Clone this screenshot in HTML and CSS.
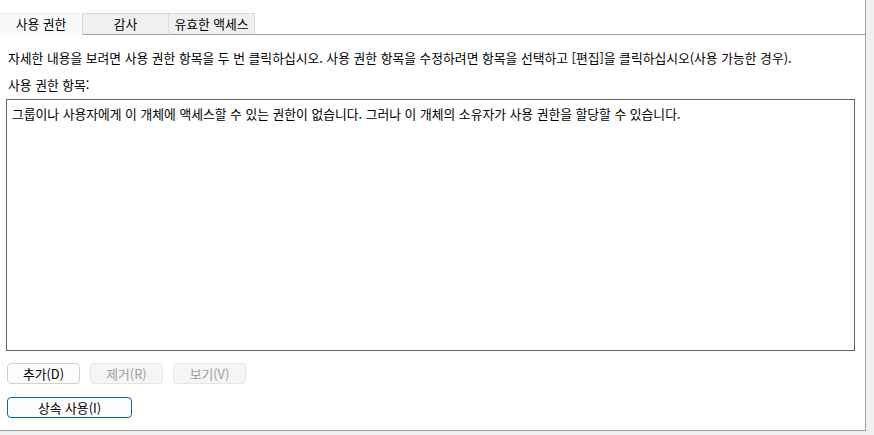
FILE: index.html
```html
<!DOCTYPE html>
<html lang="ko">
<head>
<meta charset="utf-8">
<link rel="stylesheet" href="styles.css">
</head>
<body>
<div class="panel">
  <div class="tabs">
    <div class="tab active">사용 권한</div>
    <div class="tab t2">감사</div>
    <div class="tab t3">유효한 액세스</div>
    <div class="tab-fill"></div>
  </div>
  <div class="content">
    <p class="desc">자세한 내용을 보려면 사용 권한 항목을 두 번 클릭하십시오. 사용 권한 항목을 수정하려면 항목을 선택하고 [편집]을 클릭하십시오(사용 가능한 경우).</p>
    <p class="label">사용 권한 항목:</p>
    <div class="list">그룹이나 사용자에게 이 개체에 액세스할 수 있는 권한이 없습니다. 그러나 이 개체의 소유자가 사용 권한을 할당할 수 있습니다.</div>
    <div class="btnrow">
      <button class="btn">추가(D)</button>
      <button class="btn disabled">제거(R)</button>
      <button class="btn disabled">보기(V)</button>
    </div>
    <div class="btnrow2">
      <button class="btn primary">상속 사용(I)</button>
    </div>
  </div>
</div>
</body>
</html>
```
FILE: styles.css
```css
html, body {
  margin: 0;
  padding: 0;
  background: #f0f0f0;
  width: 874px;
  height: 435px;
  overflow: hidden;
  font-family: "Noto Sans CJK KR", "Noto Sans", sans-serif;
  font-size: 12.8px;
  color: #000;
}
.panel {
  width: 866px;
  height: 431px;
  background: #fff;
  border-right: 1px solid #a0a0a0;
  border-bottom: 1px solid #a0a0a0;
  box-sizing: border-box;
  padding-top: 13px;
  display: flex;
  flex-direction: column;
}
.tabs {
  display: flex;
  height: 22px;
}
.tab {
  box-sizing: border-box;
  height: 22px;
  line-height: 20px;
  text-align: center;
  background: #f0f0f0;
  border: 1px solid #d9d9d9;
  border-bottom: 1px solid #a0a0a0;
  border-left: none;
}
.tab.active {
  width: 83px;
  background: #f9f9f9;
  border-color: #f0f0f0;
  border-bottom: none;
  border-right: 1px solid #d9d9d9;
}
.tab.t2 { width: 86px; }
.tab.t3 { width: 86px; }
.tab-fill {
  flex: 1;
  border-bottom: 1px solid #a0a0a0;
}
.content {
  padding: 0 0 0 6px;
  display: flex;
  flex-direction: column;
}
.desc {
  margin: 14px 0 0 2px;
  line-height: 18px;
  white-space: nowrap;
}
.label {
  margin: 9px 0 0 2px;
  line-height: 18px;
}
.list {
  margin-top: 5px;
  width: 849px;
  height: 252px;
  box-sizing: border-box;
  border: 1px solid #646464;
  padding: 5px 5px;
  line-height: 18px;
}
.btnrow {
  display: flex;
  gap: 10px;
  margin-top: 12px;
  padding-left: 1px;
}
.btnrow2 {
  margin-top: 13px;
  padding-left: 1px;
}
.btn {
  font-family: "Noto Sans CJK KR", "Noto Sans", sans-serif;
  font-size: 12.8px;
  width: 73px;
  height: 21px;
  padding: 0;
  line-height: 19px;
  box-sizing: border-box;
  background: #fdfdfd;
  border: 1px solid #d0d0d0;
  border-radius: 4px;
  color: #000;
}
.btn.disabled {
  background: #f5f5f5;
  border-color: #e5e5e5;
  color: #a0a0a0;
}
.btn.primary {
  width: 125px;
  border-color: #0067c0;
  background: #fdfdfd;
}
```
